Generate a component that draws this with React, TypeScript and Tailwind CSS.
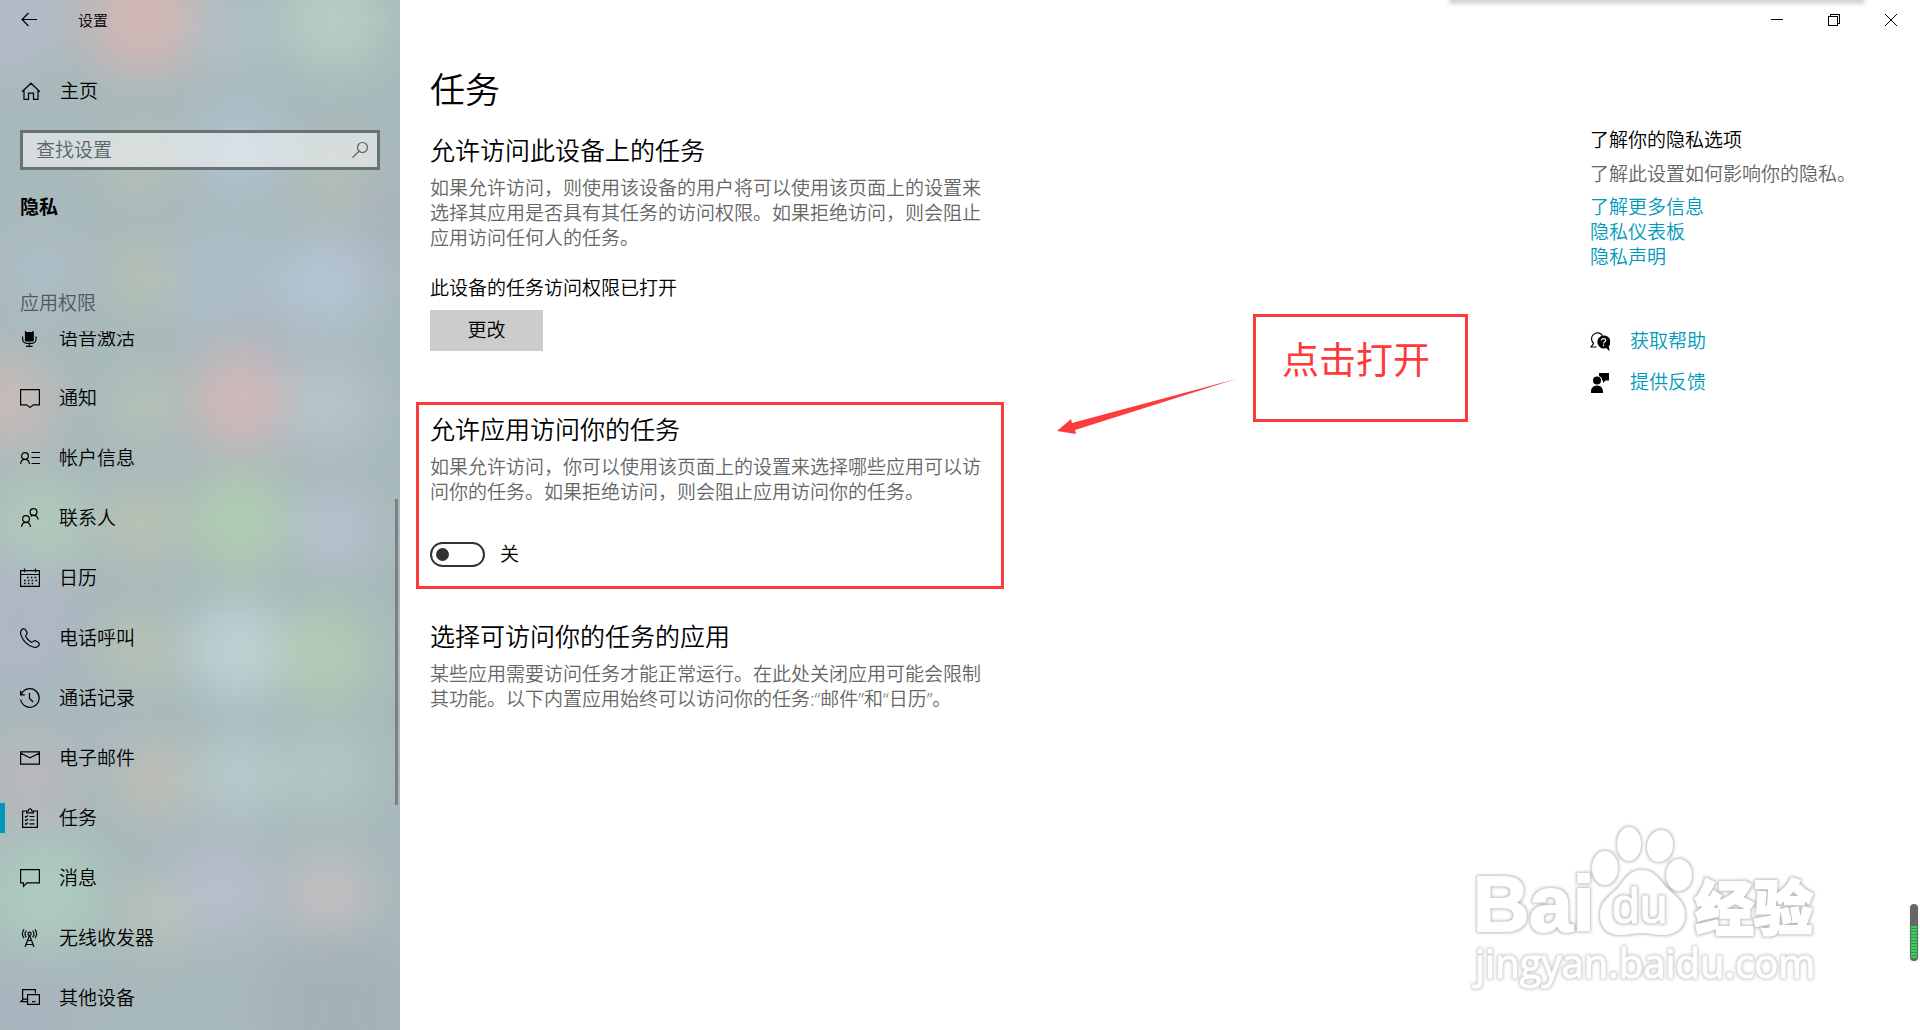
import { useState } from "react";
import type { ReactNode } from "react";

function Icon({ children, className = "" }: { children: ReactNode; className?: string }) {
  return (
    <svg
      viewBox="0 0 20 20"
      fill="none"
      stroke="currentColor"
      strokeWidth="1.2"
      aria-hidden="true"
      className={`w-5 h-5 shrink-0 ${className}`}
    >
      {children}
    </svg>
  );
}

const navItems = [
  {
    label: "语音激活",
    icon: (
      <>
        <path d="M5.500 0v13M13 0v13" />
        <rect x="5" y="4" width="8.600" height="9.600" rx="1" fill="currentColor" stroke="none" />
        <path d="M2.600 8.500v2.800a4 4 0 0 0 4 4h5.400a4 4 0 0 0 4-4V8.500M9.300 15.300v3M6 18.400h6.600" />
      </>
    ),
  },
  {
    label: "通知",
    icon: <path d="M.6 1.600h18.800v15.200h-6L10 19.400l-3.400-2.600h-6z" />,
  },
  {
    label: "帐户信息",
    icon: (
      <>
        <circle cx="5" cy="8" r="3.400" />
        <path d="M.6 16c.2-2.600 2-4.600 4.400-4.600S9.200 13.400 9.400 16M11.500 4.500h8.500M11.500 9.500h8.500M11.500 15.500h8.500" />
      </>
    ),
  },
  {
    label: "联系人",
    icon: (
      <>
        <circle cx="13.500" cy="4" r="3.400" />
        <circle cx="6" cy="11" r="3.400" />
        <path d="M1.600 19c.2-2.800 2-4.600 4.400-4.600s4.200 1.800 4.400 4.600M10.500 8.300c.9-.6 1.900-.9 3-.9 2.400 0 4.300 1.700 4.700 4.200" />
      </>
    ),
  },
  {
    label: "日历",
    icon: (
      <>
        <path d="M.6 2.600h18.800v15.800H.6zM.6 6.500h18.800M4.500.6v3.600M15.500.6v3.600" />
        <path d="M7 9.500h10M4 12.500h13M4 15.500h10" strokeDasharray="1.600 2.200" strokeWidth="1.600" />
      </>
    ),
  },
  {
    label: "电话呼叫",
    icon: (
      <path d="M2.200 1.200c1.300-1 2.700-.5 3.500.9l1.100 2c.6 1.100.2 2-.6 2.800-.7.7-.6 1.500 0 2.500 1.100 1.700 2.500 3.200 4.300 4.300 1 .6 1.700.6 2.500-.1.800-.8 1.800-1.200 2.900-.6l1.900 1.100c1.500.9 2 2.200 1 3.500-1.300 1.700-3.300 2.200-5.700 1.400C7.500 17.200 2.900 12.500 1 7.100.2 4.600.5 2.500 2.200 1.200z" />
    ),
  },
  {
    label: "通话记录",
    icon: <path d="M1.200 6.600A9.300 9.300 0 1 1 .7 11.500M.6 2.800v4h4.200M9.500 5v5.500l3.700 3.500" />,
  },
  {
    label: "电子邮件",
    icon: <path d="M.6 3.800h18.800v12.400H.6zM.8 5.200 10 9.800l9.200-4.600" />,
  },
  {
    label: "任务",
    icon: (
      <>
        <path d="M7 3H2.600v16.400h14.800V3H13M6.600 4.800V3h1.600c0-3 3.600-3 3.600 0h1.600v1.800z" />
        <path d="M9.500 8.500h5M9.500 12h5M9.500 15.800h5M5 8.300l1 .9 2-1.800M5 11.800l1 .9 2-1.800M5 15.500l1 .9 2-1.800" />
      </>
    ),
  },
  {
    label: "消息",
    icon: <path d="M.6 1.600h18.800v13.300H7L3.500 18.400v-3.500H.6z" />,
  },
  {
    label: "无线收发器",
    icon: (
      <>
        <path d="M9.200 8 5 19M9.800 8 14 19M7.300 12.500h4.400M5.800 16.500h7.400" />
        <circle cx="9.500" cy="5.800" r="1.600" />
        <path d="M6.400 9.200a4.600 4.600 0 0 1 0-6.600M12.600 9.200a4.600 4.600 0 0 0 0-6.600M4 10.200a7.500 7.500 0 0 1 0-8.800M15 10.200a7.500 7.500 0 0 0 0-8.800" />
      </>
    ),
  },
  {
    label: "其他设备",
    icon: (
      <path d="M2.600 11.500V1.600h12.800v4M7 13.600H.8l2.600-2.400H7M7.600 6.600h11.800v9.800H7.600zM12 13.600h3.500" />
    ),
  },
];

const learnMoreLinks = ["了解更多信息", "隐私仪表板", "隐私声明"];

const blobs = [
  { x: 10, y: 15, r: 60, fill: "#b5bbca" },
  { x: 143, y: 18, r: 58, fill: "#d6b7b4" },
  { x: 335, y: 20, r: 52, fill: "#b8d0c4" },
  { x: 235, y: 30, r: 40, fill: "#b2c3cb" },
  { x: 140, y: 165, r: 32, fill: "#b9c1b4" },
  { x: 240, y: 150, r: 48, fill: "#b2c2d2" },
  { x: 335, y: 180, r: 32, fill: "#b7bfb2" },
  { x: 390, y: 220, r: 40, fill: "#a9b3bd" },
  { x: 40, y: 270, r: 48, fill: "#adbdc6" },
  { x: 143, y: 277, r: 34, fill: "#b9c3b1" },
  { x: 225, y: 280, r: 55, fill: "#aebfcb" },
  { x: 327, y: 283, r: 50, fill: "#b6c5d6" },
  { x: 250, y: 345, r: 34, fill: "#adb6c2" },
  { x: 10, y: 402, r: 46, fill: "#cbbbb8" },
  { x: 145, y: 405, r: 38, fill: "#b6c3b6" },
  { x: 241, y: 400, r: 50, fill: "#d6b8b8" },
  { x: 328, y: 405, r: 46, fill: "#b8c6cf" },
  { x: 40, y: 525, r: 50, fill: "#b2cbbb" },
  { x: 142, y: 525, r: 38, fill: "#bcc5b2" },
  { x: 240, y: 522, r: 52, fill: "#b1cfb1" },
  { x: 335, y: 530, r: 38, fill: "#b9c5d4" },
  { x: 15, y: 625, r: 66, fill: "#b0b6c7" },
  { x: 140, y: 650, r: 36, fill: "#b9c5b3" },
  { x: 237, y: 650, r: 50, fill: "#c0d5d7" },
  { x: 325, y: 655, r: 50, fill: "#b4cdb4" },
  { x: 110, y: 730, r: 32, fill: "#acb8c0" },
  { x: 30, y: 780, r: 46, fill: "#bbb8bc" },
  { x: 155, y: 780, r: 38, fill: "#c3c0b4" },
  { x: 240, y: 775, r: 45, fill: "#b8cccd" },
  { x: 328, y: 770, r: 45, fill: "#b3c9c3" },
  { x: 195, y: 850, r: 30, fill: "#abb7c1" },
  { x: 45, y: 895, r: 58, fill: "#aecdc0" },
  { x: 155, y: 915, r: 34, fill: "#bfc5b9" },
  { x: 222, y: 890, r: 48, fill: "#b9bfce" },
  { x: 328, y: 893, r: 42, fill: "#c7c0c2" },
  { x: 30, y: 1010, r: 50, fill: "#a8b4bf" },
  { x: 340, y: 1010, r: 75, fill: "#a3b0b8" },
];

function AcrylicBackdrop() {
  return (
    <svg
      viewBox="0 0 400 1030"
      preserveAspectRatio="none"
      aria-hidden="true"
      className="absolute inset-0 w-full h-full -z-10"
    >
      <defs>
        <filter id="acrylic" x="-20%" y="-20%" width="140%" height="140%" colorInterpolationFilters="sRGB">
          <feGaussianBlur stdDeviation="22" />
        </filter>
      </defs>
      <rect width="400" height="1030" fill="#a8b9bb" />
      <g filter="url(#acrylic)" opacity="0.85">
        {blobs.map((b) => (
          <circle key={`${b.x}-${b.y}`} cx={b.x} cy={b.y} r={b.r} fill={b.fill} />
        ))}
      </g>
    </svg>
  );
}

function Sidebar() {
  const [active, setActive] = useState("任务");

  return (
    <aside className="relative isolate w-[400px] shrink-0 flex flex-col overflow-hidden bg-[#a8b9bb]">
      <AcrylicBackdrop />

      {/* Title */}
      <div className="h-10 flex items-center pl-5 gap-[38px]">
        <button aria-label="返回" className="w-5 h-5">
          <Icon>
            <path d="M17 9.500H2.500M8.500 3 2 9.500 8.500 16" />
          </Icon>
        </button>
        <span className="text-[15px] leading-5">设置</span>
      </div>

      <a href="#home" className="mt-[26px] h-[50px] flex items-center gap-5 px-5">
        <Icon>
          <path d="M2 10.800 11 2.200l9 8.600M4 9.200v9.200h4.500v-6.200h5v6.200H18V9.200" />
        </Icon>
        主页
      </a>

      {/* Search */}
      <div className="mt-[14px] mx-5 h-10 flex items-center border-3 border-[#6a7374] bg-white/50 pl-[13px] pr-[7px]">
        <input
          type="search"
          aria-label="查找设置"
          placeholder="查找设置"
          className="flex-1 min-w-0 bg-transparent outline-none placeholder:text-[#5c6465]"
        />
        <Icon className="text-[#5c6465]">
          <circle cx="12.500" cy="7.500" r="5" />
          <path d="M9 11.200 2.500 17.500" />
        </Icon>
      </div>

      <h2 className="mt-6 px-5 font-bold leading-[26px]">隐私</h2>
      <p className="mt-[70px] px-5 leading-[26px] text-[#4f5a5b]">应用权限</p>

      {/* Permission list, scrolled part of the way down */}
      <nav className="mt-[15px] overflow-hidden">
        <ul className="-mt-[23px]">
          {navItems.map((item) => (
            <li key={item.label}>
              <a
                href={`#${item.label}`}
                onClick={() => setActive(item.label)}
                aria-current={active === item.label ? "page" : undefined}
                className="h-[60px] flex items-center"
              >
                <span className={`w-[5px] h-[30px] ${active === item.label ? "bg-[#0099bc]" : ""}`} />
                <span className="flex items-center gap-[19px] pl-[15px]">
                  <Icon>{item.icon}</Icon>
                  {item.label}
                </span>
              </a>
            </li>
          ))}
        </ul>
      </nav>

      <div className="absolute right-[2px] top-[499px] w-[3px] h-[306px] bg-[#7b7f80]" />
    </aside>
  );
}

function WindowControls() {
  return (
    <div className="flex h-10 pr-px text-black">
      <button aria-label="最小化" className="w-[57px] flex items-center justify-center">
        <svg viewBox="0 0 12 12" className="w-3 h-3" stroke="currentColor" shapeRendering="crispEdges">
          <path d="M0 5.500h12" />
        </svg>
      </button>
      <button aria-label="还原" className="w-[57px] flex items-center justify-center">
        <svg viewBox="0 0 12 12" className="w-3 h-3" fill="none" stroke="currentColor" shapeRendering="crispEdges">
          <path d="M.5 2.500h9v9h-9zM2.500 2.500v-2h9v9h-2" />
        </svg>
      </button>
      <button aria-label="关闭" className="w-[57px] flex items-center justify-center">
        <svg viewBox="0 0 12 12" className="w-3 h-3" stroke="currentColor">
          <path d="M0 0l12 12M12 0 0 12" />
        </svg>
      </button>
    </div>
  );
}

function HelpPanel() {
  return (
    <aside className="w-[330px] shrink-0 pt-[87px]">
      <h3 className="leading-[26px]">了解你的隐私选项</h3>
      <p className="mt-2 leading-[26px] text-[#666]">了解此设置如何影响你的隐私。</p>
      <ul className="mt-2 leading-[25px] text-[#0099bc]">
        {learnMoreLinks.map((label) => (
          <li key={label}>
            <a href="#privacy">{label}</a>
          </li>
        ))}
      </ul>
      <div className="mt-[51px] flex flex-col text-[#0099bc]">
        <a href="#help" className="h-[41px] flex items-center gap-5">
          <Icon className="text-black">
            <path d="M3.800 11.500A6 6 0 1 1 12.600 3.600M3.600 11.300 1 15h5.500" />
            <path
              d="M13.500 3.500a6.500 6.500 0 1 0 2.600 12.600l3.600 3.200-.9-5a6.500 6.500 0 0 0-5.300-10.800z"
              fill="currentColor"
              stroke="none"
            />
            <path d="M11.400 8.600c0-2.600 4.200-2.600 4.200-.2 0 1.600-2.100 1.500-2.100 3.200M13.500 12.600v1.600" stroke="white" />
          </Icon>
          获取帮助
        </a>
        <a href="#feedback" className="h-[41px] flex items-center gap-5">
          <Icon className="text-black">
            <g fill="currentColor" stroke="none">
              <circle cx="7" cy="7.500" r="4" />
              <path d="M1 20v-1.500c0-3.200 2.200-6 6-6s6 2.800 6 6V20zM9 0h10v7.500h-3.500L13 10V7.500h-.8C12.300 5.500 11 3.500 9 3z" />
            </g>
          </Icon>
          提供反馈
        </a>
      </div>
    </aside>
  );
}

function Watermark() {
  return (
    <svg
      viewBox="0 0 360 180"
      aria-hidden="true"
      className="absolute right-[92px] bottom-[32px] w-[360px] h-[180px]"
      style={{ fontFamily: '"Open Sans", "Noto Sans CJK SC", sans-serif' }}
    >
      <defs>
        <filter id="halo" x="-5%" y="-5%" width="110%" height="110%" colorInterpolationFilters="sRGB">
          <feMorphology in="SourceAlpha" operator="dilate" radius="1" result="wide" />
          <feGaussianBlur in="wide" stdDeviation="1.500" result="soft" />
          <feFlood floodColor="#bdbdbd" />
          <feComposite in2="soft" operator="in" result="glow" />
          <feMerge>
            <feMergeNode in="glow" />
            <feMergeNode in="SourceGraphic" />
          </feMerge>
        </filter>
      </defs>
      <g fill="white" filter="url(#halo)">
        <text
          x="5"
          y="113"
          fontSize="78"
          fontWeight="700"
          stroke="white"
          strokeWidth="2"
          fontFamily="Liberation Sans, sans-serif"
        >
          Bai
        </text>
        <ellipse cx="137" cy="50" rx="13" ry="17" />
        <ellipse cx="161" cy="26" rx="12" ry="17" />
        <ellipse cx="192" cy="28" rx="13" ry="16" transform="rotate(12 192 28)" />
        <ellipse cx="211" cy="57" rx="13" ry="16" />
        <path d="M174 52c13 0 18 11 26 19 9 8 17 14 17 26 0 13-10 20-22 20-8 0-14-2-21-2s-14 2-22 2c-13 0-20-8-20-20 0-13 9-18 17-26 8-9 12-19 25-19z" />
        <text x="227" y="112" fontSize="59" fontWeight="900" stroke="white" strokeWidth="2">
          经验
        </text>
      </g>
      <g fill="white" filter="url(#halo)">
        <text x="144" y="105" fontSize="50" stroke="white" strokeWidth="1" fontFamily="Liberation Sans, sans-serif">
          du
        </text>
      </g>
      <g fill="white" filter="url(#halo)" opacity="0.8">
        <text x="7" y="160" fontSize="40" fontWeight="500" stroke="white" strokeWidth="1">
          jingyan.baidu.com
        </text>
      </g>
    </svg>
  );
}

export default function App() {
  const [allowApps, setAllowApps] = useState(false);

  return (
    <div
      className="relative min-h-screen flex overflow-hidden bg-white text-[19px] font-[350] text-black"
      style={{ fontFamily: '"Open Sans", "Noto Sans CJK SC", sans-serif' }}
    >
      <Sidebar />

      <div className="relative flex-1 flex flex-col">
        <header className="flex justify-end">
          <WindowControls />
        </header>

        <div className="flex flex-1 justify-between pl-[30px]">
          <main className="w-[560px] pt-[25px]">
            <h1 className="text-[35px] leading-[50px]">任务</h1>

            <section className="mt-5">
              <h2 className="text-[25px] leading-[30px]">允许访问此设备上的任务</h2>
              <p className="mt-[11px] leading-[25px] text-[#666]">
                如果允许访问，则使用该设备的用户将可以使用该页面上的设置来选择其应用是否具有其任务的访问权限。如果拒绝访问，则会阻止应用访问任何人的任务。
              </p>
              <p className="mt-[25px] leading-[25px]">此设备的任务访问权限已打开</p>
              <button className="mt-[9px] block w-[113px] h-[41px] bg-[#ccc]">更改</button>
            </section>

            <section className="relative mt-[63px]">
              <div className="absolute -inset-x-[14px] -top-3 -bottom-[22px] border-3 border-[#ff3a3a] pointer-events-none" />
              <h2 className="text-[25px] leading-[30px]">允许应用访问你的任务</h2>
              <p className="mt-[11px] leading-[25px] text-[#666]">
                如果允许访问，你可以使用该页面上的设置来选择哪些应用可以访问你的任务。如果拒绝访问，则会阻止应用访问你的任务。
              </p>
              <label className="mt-[37px] flex items-center gap-[15px] leading-[25px]">
                <input
                  type="checkbox"
                  role="switch"
                  checked={allowApps}
                  onChange={(e) => setAllowApps(e.target.checked)}
                  className="appearance-none w-[55px] h-[25px] rounded-full border-2 border-[#333] flex items-center px-1 before:content-[''] before:w-[13px] before:h-[13px] before:rounded-full before:bg-[#333] checked:justify-end"
                />
                {allowApps ? "开" : "关"}
              </label>
            </section>

            <section className="mt-[54px]">
              <h2 className="text-[25px] leading-[30px]">选择可访问你的任务的应用</h2>
              <p className="mt-[11px] leading-[25px] text-[#666]">
                某些应用需要访问任务才能正常运行。在此处关闭应用可能会限制其功能。以下内置应用始终可以访问你的任务:“邮件”和“日历”。
              </p>
            </section>
          </main>

          <HelpPanel />
        </div>

        {/* Annotation */}
        <div className="absolute left-[853px] top-[314px] w-[215px] h-[108px] border-3 border-[#ff3a3a] pl-[26px] pt-[18px] text-[37px] font-normal leading-[50px] text-[#ff3a3a]">
          点击打开
        </div>
        <svg
          viewBox="0 0 180 56"
          aria-hidden="true"
          className="absolute left-[657px] top-[379px] w-[180px] h-[56px]"
        >
          <path d="M0 52 14 40l1 4L179 0 18 51l1 4z" fill="#ff3a3a" />
        </svg>

        <Watermark />

        {/* Edge of the window that sits above this one */}
        <div className="absolute right-[57px] top-0 w-[412px] h-[2px] bg-[#d6d6d6] shadow-[0_0_4px_2px_#d6d6d6]" />

        {/* Battery gauge docked to the screen edge */}
        <div className="absolute right-[2px] top-[904px] w-2 h-[57px] rounded-full bg-[#666] px-px pt-[22px] pb-[2px] shadow-sm">
          <div className="h-full rounded-b-full bg-[repeating-linear-gradient(#2bd65b_0_2px,#4a8a5c_2px_3px)]" />
        </div>
      </div>
    </div>
  );
}
